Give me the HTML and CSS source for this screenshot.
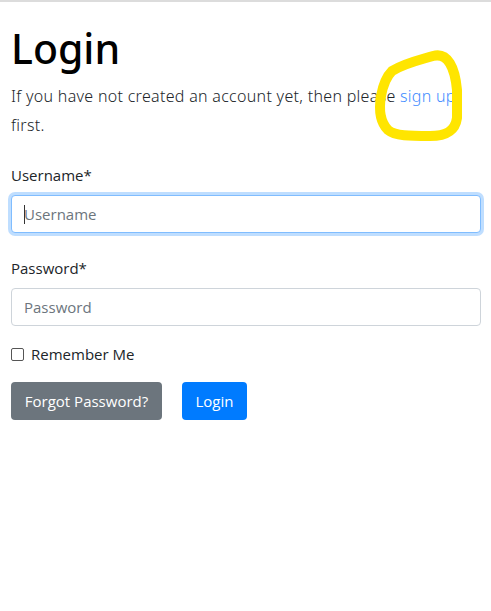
FILE: index.html
```html
<!DOCTYPE html>
<html lang="en">
<head>
<meta charset="utf-8">
<title>Login</title>
<link rel="stylesheet" href="styles.css">
</head>
<body>
<div class="topline"></div>
<main class="page">
  <h1 class="title">Login</h1>
  <p class="intro">If you have not created an account yet, then please <a class="link" href="#">sign up</a> first.</p>
  <form class="form">
    <div class="group">
      <label class="label" for="username">Username*</label>
      <div class="field-wrap">
        <input class="input input-focus" id="username" type="text" placeholder="Username">
        <span class="caret"></span>
      </div>
    </div>
    <div class="group group-second">
      <label class="label" for="password">Password*</label>
      <input class="input" id="password" type="password" placeholder="Password">
    </div>
    <div class="check">
      <span class="box"></span>
      <span class="check-label">Remember Me</span>
    </div>
    <div class="actions">
      <button type="button" class="btn btn-gray">Forgot Password?</button>
      <button type="button" class="btn btn-blue">Login</button>
    </div>
  </form>
  <svg class="scribble" width="491" height="611" viewBox="0 0 491 611" aria-hidden="true">
    <path d="M392 71 C405 63 420 60 433 56 C448 52 455 68 457 90 L457 118 C455 132 445 136 430 136 C410 136 395 136 388 130 C380 122 379 108 381 96 C383 85 386 77 392 71 Z" fill="none" stroke="#ffe500" stroke-width="10" stroke-linejoin="round"/>
  </svg>
</main>
</body>
</html>
```
FILE: styles.css
```css
* { box-sizing: border-box; }
html, body { margin: 0; padding: 0; background: #fff; }
body {
  font-family: "Open Sans", "Noto Sans", sans-serif;
  color: #212529;
  width: 491px;
  height: 611px;
  overflow: hidden;
}
.topline { height: 2px; background: #dcdcdc; }
.page {
  position: relative;
  padding: 22px 10px 0 11px;
}
.title {
  font-family: "Noto Sans", sans-serif;
  font-weight: 500;
  font-size: 41px;
  line-height: 48px;
  margin: 0;
  color: #000;
}
.intro {
  font-family: "Noto Sans", sans-serif;
  font-weight: 300;
  font-size: 16px;
  letter-spacing: 0.3px;
  line-height: 29px;
  margin: 10px 0 0 0;
  color: #212529;
}
.link { color: #3d8bff; text-decoration: none; }
.form { margin-top: 23px; display: flex; flex-direction: column; }
.group { display: flex; flex-direction: column; }
.group-second { margin-top: 23px; }
.label { font-size: 15px; line-height: 24px; margin-bottom: 8px; }
.field-wrap { position: relative; }
.input {
  width: 100%;
  height: 38px;
  padding: 6px 12px;
  font-family: inherit;
  font-size: 15px;
  border: 1px solid #ced4da;
  border-radius: 4px;
  color: #495057;
  outline: none;
  background: #fff;
}
.input::placeholder { color: #6c757d; }
.input-focus {
  border-color: #80bdff;
  box-shadow: 0 0 0 3px rgba(0, 123, 255, 0.25);
}
.caret {
  position: absolute;
  left: 13px;
  top: 10px;
  width: 1px;
  height: 19px;
  background: #333;
}
.check { display: flex; align-items: center; margin-top: 16px; height: 24px; }
.box {
  width: 13px; height: 13px;
  border: 1px solid #555;
  border-radius: 2px;
  margin-right: 7px;
}
.check-label { font-size: 15px; }
.actions { display: flex; gap: 20px; margin-top: 16px; }
.btn {
  font-family: inherit;
  font-size: 15px;
  line-height: 24px;
  padding: 6px 0;
  border: 1px solid transparent;
  border-radius: 4px;
  color: #fff;
  height: 38px;
  white-space: nowrap;
  text-align: center;
}
.btn-gray { background: #6c757d; width: 151px; }
.btn-blue { background: #007bff; width: 65px; }
.scribble { position: absolute; left: 0; top: -2px; pointer-events: none; }
```
